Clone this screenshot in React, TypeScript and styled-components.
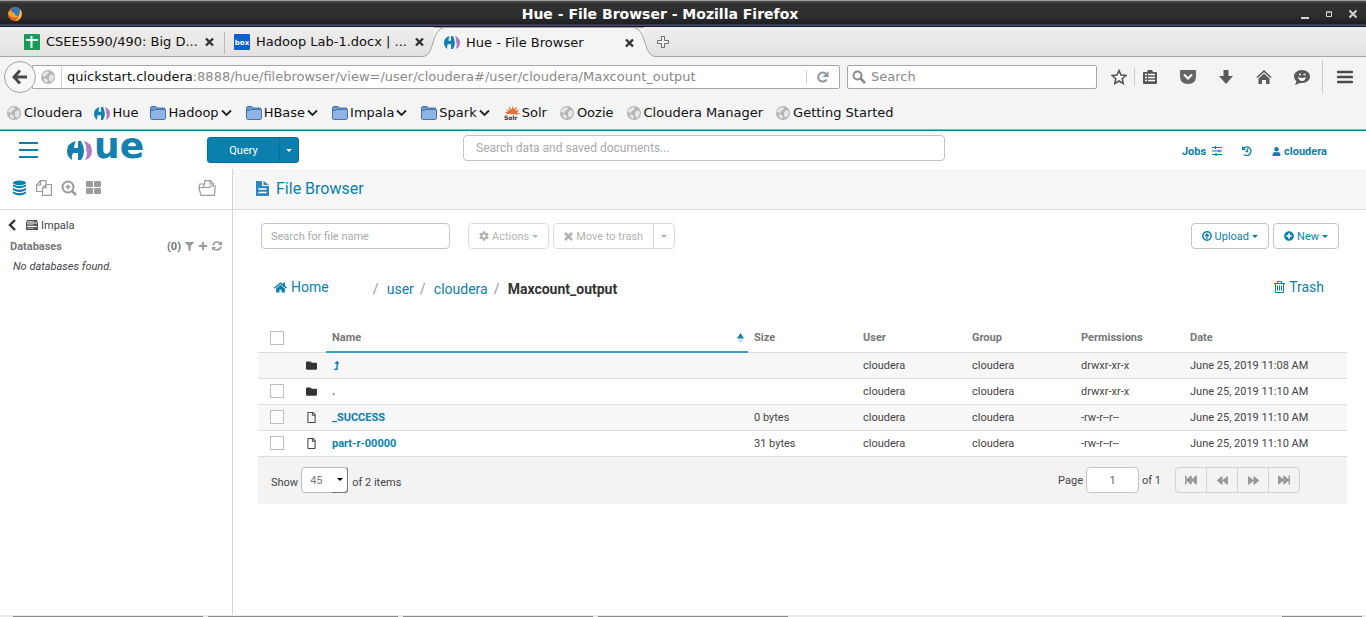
import React from 'react';
import styled, { createGlobalStyle, css } from 'styled-components';
import {
  FaCog, FaUser, FaFilter, FaPlus, FaFolder, FaRegFile, FaFastBackward,
  FaFastForward, FaBackward, FaForward, FaPlusCircle, FaLevelUpAlt, FaHome, FaChevronLeft,
} from 'react-icons/fa';

const BLUE = '#0b7fad';
const UI = '"DejaVu Sans", sans-serif';
const APP = 'Roboto, sans-serif';

const GlobalStyle = createGlobalStyle`
  *, *::before, *::after { box-sizing: border-box; }
  html, body { margin: 0; padding: 0; }
  body { background: #fff; font-family: ${APP}; font-size: 11px; color: #444; }
  button, input, select { font: inherit; margin: 0; }
  button { background: none; border: 0; padding: 0; color: inherit; cursor: pointer; }
  a { color: inherit; text-decoration: none; }
  svg { display: block; flex: none; }
`;

/* ---------- window and browser chrome ---------- */

const Page = styled.div`
  display: flex;
  flex-direction: column;
  min-height: 100vh;
`;

const TitleBar = styled.header`
  display: grid;
  grid-template-columns: 46px 1fr 92px;
  align-items: center;
  height: 27px;
  padding: 0 7px;
  border-top: 1px solid #9b9f9b;
  border-bottom: 1px solid #14181f;
  background: linear-gradient(#4b4d4b 0, #2f2f2f 3px, #2f2f2f 14px, #1d1f20 23px, #4a4c70 24px);
  color: #fff;
  font: bold 14px/20px ${UI};
  text-align: center;
`;

const WindowButtons = styled.div`
  display: flex;
  justify-content: flex-end;
  gap: 12px;
  color: #d6d6cf;
`;

const TabStrip = styled.nav`
  display: flex;
  height: 30px;
  padding-left: 14px;
  border-bottom: 1px solid #a5a5a3;
  background: linear-gradient(#efeeed, #e3e2e0);
  color: #111;
  font: 13px/28px ${UI};
`;

const Tab = styled.div<{ $active?: boolean; $divided?: boolean }>`
  position: relative;
  display: flex;
  align-items: center;
  gap: 6px;
  flex: 0 1 210px;
  min-width: 0;
  height: 29px;
  padding: 0 10px;
  ${p => p.$divided && css`
    &::after { content: ''; position: absolute; right: -1px; top: 5px; width: 1px; height: 22px; background: #b9b8b6; }
  `}
  ${p => p.$active && css`
    z-index: 1;
    height: 30px;
    border-top: 1px solid #a5a5a3;
    background: #f4f4f4;
  `}
`;

const TabLabel = styled.span`
  flex: 1;
  overflow: hidden;
  white-space: nowrap;
`;

const TabEdge = styled.svg<{ $side: 'left' | 'right' }>`
  position: absolute;
  z-index: -1;
  top: -1px;
  ${p => p.$side}: -16px;
`;

const NewTab = styled.button`
  padding-left: 12px;
`;

const NavBar = styled.div`
  display: flex;
  align-items: center;
  height: 40px;
  padding: 0 13px 0 4px;
  background: #f4f4f4;
  font: 13px/22px ${UI};
`;

const BackButton = styled.button`
  display: grid;
  place-items: center;
  z-index: 1;
  flex: none;
  width: 32px;
  height: 32px;
  margin-right: -4px;
  border: 1px solid #a3a3a3;
  border-radius: 50%;
  background: #f7f7f7;
`;

const AddressBar = styled.div`
  display: flex;
  align-items: center;
  flex: 1;
  min-width: 0;
  height: 24px;
  padding-left: 7px;
  border: 1px solid #a6a6a6;
  border-radius: 0 2px 2px 0;
  background: #fff;
  color: #8a8a8a;
`;

const Address = styled.div`
  flex: 1;
  margin-left: 5px;
  padding-left: 5px;
  border-left: 1px solid #d4d4d4;
  overflow: hidden;
  white-space: nowrap;
  b { font-weight: normal; color: #111; }
`;

const Reload = styled.button`
  padding: 0 9px;
  border-left: 1px solid #d4d4d4;
`;

const SearchBar = styled.label`
  display: flex;
  align-items: center;
  flex: 0 1 250px;
  gap: 5px;
  height: 24px;
  margin: 0 14px 0 7px;
  padding: 0 4px;
  border: 1px solid #a6a6a6;
  border-radius: 2px;
  background: #fff;
  input { flex: 1; min-width: 0; border: 0; padding: 0; outline: 0; background: none; }
  input::placeholder { color: #8a8a8a; opacity: 1; }
`;

const Tools = styled.div`
  display: flex;
  align-items: center;
  gap: 22px;
`;

const ToolPair = styled.div`
  display: flex;
  align-items: center;
  gap: 7px;
`;

const Divider = styled.span<{ $tall?: boolean }>`
  width: 1px;
  height: ${p => (p.$tall ? 34 : 18)}px;
  background: #cfcfcf;
`;

const MenuTool = styled.div`
  display: flex;
  align-items: center;
  gap: 14px;
  margin-left: -10px;
`;

const Bookmarks = styled.nav`
  display: flex;
  gap: 12px;
  height: 33px;
  padding-left: 6px;
  border-bottom: 1px solid #a9aaa8;
  background: #f4f4f4;
  color: #111;
  font: 13px/32px ${UI};
`;

const Bookmark = styled.a<{ $menu?: boolean }>`
  display: flex;
  align-items: center;
  gap: 2px;
  padding-right: ${p => (p.$menu ? 2 : 0)}px;
  white-space: nowrap;
`;

/* ---------- Hue header ---------- */

const HueBar = styled.header`
  display: flex;
  height: 39px;
  padding: 0 39px 0 19px;
  border-top: 1px solid #0f76a6;
  color: ${BLUE};
`;

const Brand = styled.div`
  display: flex;
  align-items: center;
  flex: 0 0 444px;
`;

const LogoLink = styled.a`
  display: flex;
  align-items: center;
  gap: 2px;
  width: 78px;
  margin: 0 62px 0 28px;
  color: #1380b0;
  font: bold 36px/38px ${UI};
  white-space: nowrap;
  span { display: block; padding-bottom: 8px; }
`;

const QueryGroup = styled.div`
  display: flex;
  height: 26px;
  border: 1px solid #096f98;
  border-radius: 3px;
  background: ${BLUE};
  color: #fff;
  button { display: grid; place-items: center; width: 71px; }
  button + button { width: 19px; border-left: 1px solid #096f98; }
`;

const TextBox = styled.input<{ $size?: number }>`
  height: 26px;
  min-width: 0;
  padding: 0 9px;
  border: 1px solid #c3c3c3;
  border-radius: 4px;
  background: #fff;
  color: #666;
  font-size: ${p => p.$size ?? 11}px;
  &::placeholder { color: #aaa; opacity: 1; }
`;

const GlobalSearch = styled(TextBox)`
  flex: 0 1 482px;
  margin-top: 4px;
  padding: 0 12px;
`;

const UserLinks = styled.nav`
  display: flex;
  align-items: center;
  gap: 20px;
  margin-left: auto;
  padding-top: 2px;
  font-weight: bold;
  a { display: flex; align-items: center; gap: 3px; }
  a:first-child { gap: 6px; }
`;

/* ---------- layout ---------- */

const Body = styled.div`
  display: flex;
  flex: 1;
`;

const Sidebar = styled.aside`
  flex: 0 0 233px;
  border-right: 1px solid #d3d3d3;
`;

const AssistTabs = styled.div`
  display: flex;
  align-items: center;
  gap: 9px;
  height: 41px;
  padding: 0 16px 2px 12px;
  border-bottom: 1px solid #d9d9d9;
  color: #9b9b9b;
  button:last-child { margin-left: auto; }
`;

const SourceLink = styled.a`
  display: flex;
  align-items: center;
  gap: 3px;
  height: 20px;
  margin-top: 5px;
  padding-left: 8px;
  svg + svg { margin-left: 6px; }
`;

const DatabaseHead = styled.div`
  display: flex;
  align-items: center;
  gap: 4px;
  height: 22px;
  padding: 0 10px;
  color: #777;
  font-weight: bold;
  h2 { flex: 1; margin: 0; font-size: 11px; }
  button { color: #999; }
`;

const Empty = styled.p`
  margin: 0;
  padding-left: 13px;
  line-height: 20px;
  font-style: italic;
`;

const Main = styled.main`
  flex: 1;
  min-width: 0;
`;

const PageHead = styled.div`
  display: flex;
  align-items: center;
  gap: 7px;
  height: 41px;
  padding: 0 23px 2px;
  border-bottom: 1px solid #dcdcdc;
  background: #f7f7f7;
  color: ${BLUE};
  h1 { margin: 0; font-size: 16px; font-weight: normal; }
`;

const Toolbar = styled.div`
  display: flex;
  gap: 4px;
  padding: 13px 27px 0 28px;
`;

const FileSearch = styled(TextBox)`
  flex: 0 1 189px;
  margin-right: 14px;
`;

const Btn = styled.button`
  display: flex;
  align-items: center;
  gap: 3px;
  height: 26px;
  padding: 0 10px;
  border: 1px solid #c3c3c3;
  border-radius: 4px;
  color: ${BLUE};
  white-space: nowrap;
  &:disabled { border-color: #dcdcdc; color: #b3b3b3; }
`;

const Joined = styled.div`
  display: flex;
  button:first-child { border-radius: 4px 0 0 4px; }
  button:last-child { margin-left: -1px; padding: 0 7px; border-radius: 0 4px 4px 0; }
`;

const Right = styled.div`
  display: flex;
  gap: 4px;
  margin-left: auto;
`;

const Crumbs = styled.nav`
  display: flex;
  align-items: center;
  padding: 26px 42px 0 41px;
  color: ${BLUE};
  font-size: 14px;
  line-height: 20px;
`;

const IconLink = styled.a`
  display: flex;
  align-items: center;
  gap: 4px;
  height: 20px;
`;

const Path = styled.ol`
  display: flex;
  flex: 1;
  margin: 4px 0 0 44px;
  padding: 0;
  list-style: none;
  li::before { content: '/'; display: inline-block; width: 14px; margin-left: 6px; color: #999; font-weight: normal; }
  li:first-child::before { margin-left: 0; }
  li:last-child { color: #333; font-weight: bold; }
`;

const Files = styled.section`
  padding: 25px 19px 0 25px;
`;

const Table = styled.table`
  width: 100%;
  border-collapse: collapse;
  table-layout: fixed;
  th, td { height: 26px; padding: 0 6px; border-bottom: 1px solid #dcdcdc; text-align: left; }
  td:first-child, th:first-child { padding-left: 12px; }
  th { height: 28px; color: #777; }
  tbody tr:nth-child(odd) { background: #f7f7f7; }
  td a { color: ${BLUE}; font-weight: bold; }
`;

const Col = styled.col<{ $w?: number }>`
  width: ${p => (p.$w ? `${p.$w}px` : 'auto')};
`;

const SortedTh = styled.th`
  && { border-bottom: 2px solid #3f9fc4; }
  div { display: flex; align-items: center; justify-content: space-between; margin-right: -2px; }
`;

const Check = styled.input`
  display: block;
  appearance: none;
  width: 14px;
  height: 14px;
  margin: 0;
  border: 1px solid #bdbdbd;
  background: #fff;
`;

const Footer = styled.div`
  display: flex;
  align-items: center;
  gap: 3px;
  height: 47px;
  padding: 0 15px 0 13px;
  background: #f3f3f3;
`;

const PageSize = styled.label`
  display: flex;
  align-items: center;
  gap: 4px;
  span { padding-top: 4px; }
  span:first-child { margin-right: -1px; }
`;

const SelectBox = styled.div`
  display: grid;
  grid-template-columns: 1fr 16px;
  width: 47px;
  height: 26px;
  select {
    grid-area: 1 / 1 / 2 / 3;
    appearance: none;
    padding: 0 8px;
    border: 1px solid #bcbcbc;
    border-radius: 4px;
    background: #fff;
    color: #777;
  }
`;

const SelectArrow = styled.i`
  display: grid;
  place-items: center;
  grid-area: 1 / 2;
  border-right: 1px solid #777;
  border-bottom: 1px solid #777;
  border-radius: 0 3px 3px 0;
  color: #000;
  pointer-events: none;
`;

const Paging = styled.div`
  display: flex;
  align-items: center;
  gap: 3px;
  margin-left: auto;
`;

const PageInput = styled(TextBox)`
  width: 53px;
  text-align: center;
`;

const Pager = styled.div`
  display: flex;
  height: 26px;
  margin-left: 11px;
  padding-right: 32px;
  border: 1px solid #f0f0f0;
  border-radius: 4px;
  button {
    display: grid;
    place-items: center;
    width: 32px;
    margin: -1px -1px -1px 0;
    border: 1px solid #d3d3d3;
    color: #999;
  }
  button:first-child { margin-left: -1px; border-radius: 4px 0 0 4px; }
  button:last-child { border-radius: 0 4px 4px 0; }
`;

const TaskBar = styled.footer`
  display: flex;
  gap: 5px;
  height: 2px;
  padding: 1px 4px 0 13px;
  background: #ecebe9;
`;

const Task = styled.span<{ $w: number; $last?: boolean }>`
  flex: 0 1 ${p => p.$w}px;
  height: 1px;
  background: #8d8b89;
  margin-left: ${p => (p.$last ? 'auto' : '0')};
`;

/* ---------- drawings ---------- */

const Caret = ({ w = 6 }: { w?: number }) => (
  <svg width={w} height={3} viewBox="0 0 6 3"><path d="M0 0h6L3 3z" fill="currentColor" /></svg>
);

const HueMark = ({ w = 16, h = 13 }: { w?: number; h?: number }) => (
  <svg width={w} height={h} viewBox="0 0 25 19" preserveAspectRatio="none">
    <path d="M9 0Q0 2 0 10q0 6 5 9-1-4 1-7h5v7h3q3-4 3-9T14 0h-3v7H7Q7 3 9 0z" fill="#1380b0" />
    <path d="M17 0q3 5 2 9l1 2q0 5-2 8 7-2 7-9 0-8-8-10z" fill="#b07cc6" />
  </svg>
);

const Globe = () => (
  <svg width="16" height="16" viewBox="0 0 16 16">
    <circle cx="8" cy="8" r="7" fill="#b5b5b5" />
    <path d="M3 4l4-2 2 1-1 2-2 1-1 2-3-1zM9 7l3-2 2 2-1 4-2 2-2-2zM4 9l3 1 1 2-1 2-3-2z" fill="#e6e6e6" />
  </svg>
);

const Folder = () => (
  <svg width="16" height="16" viewBox="0 0 16 16">
    <path d="M.5 14V2.500l1-1h4.500l1.500 1.500h7v3" fill="#6f96c8" stroke="#4672ab" />
    <path d="M.5 5.500h3l1-1h11v9l-1 1h-13l-1-1z" fill="#8db4e2" stroke="#4672ab" />
  </svg>
);

const SolrMark = () => (
  <svg width="16" height="16" viewBox="0 0 16 16">
    <path d="M3 9L1 7l3 0-2-3 3.500 2L5 1l2.500 4L9 .5l.8 4L13 1.500 11.500 6 15 4.500 13 8l3 0-2 1.500z" fill="#e2703a" />
    <text x="0" y="15" fontFamily="DejaVu Sans" fontWeight="bold" fontSize="6" fill="#333">Solr</text>
  </svg>
);

const Chevron = () => (
  <svg width="11" height="8" viewBox="0 0 11 8"><path d="M1 1.500L5.500 6 10 1.500" fill="none" stroke="#222" strokeWidth="1.800" /></svg>
);

const Close = () => (
  <svg width="9" height="10" viewBox="0 0 9 10"><path d="M1 1.500l7 7M8 1.500l-7 7" stroke="#333" strokeWidth="2.400" /></svg>
);

const Firefox = () => (
  <svg width="16" height="16" viewBox="0 0 16 16">
    <circle cx="8" cy="8" r="7" fill="#e0601c" />
    <circle cx="8.500" cy="6" r="4.800" fill="#2f78c0" />
    <path d="M1 6q2 0 3-2 1 3 4 3-1 3 4 3-2 3-7 1-4-1-4-5z" fill="#f0a030" />
    <path d="M13 3q3 4 1 8-2 4-6 4 5-3 5-12z" fill="#f6c24a" />
  </svg>
);

const Sheets = () => (
  <svg width="16" height="16" viewBox="0 0 16 16">
    <rect width="16" height="16" rx="1" fill="#149c58" />
    <path d="M2 6h12M7.500 2v12" stroke="#fff" strokeWidth="2" />
  </svg>
);

const Box = () => (
  <svg width="16" height="16" viewBox="0 0 16 16">
    <rect width="16" height="16" rx="1" fill="#0b5fd0" />
    <text x="8" y="11" textAnchor="middle" fontFamily="DejaVu Sans" fontWeight="bold" fontSize="7" fill="#fff">box</text>
  </svg>
);

const bookmarks: { label: string; icon: React.ReactNode; menu?: boolean }[] = [
  { label: 'Cloudera', icon: <Globe /> },
  { label: 'Hue', icon: <HueMark /> },
  { label: 'Hadoop', icon: <Folder />, menu: true },
  { label: 'HBase', icon: <Folder />, menu: true },
  { label: 'Impala', icon: <Folder />, menu: true },
  { label: 'Spark', icon: <Folder />, menu: true },
  { label: 'Solr', icon: <SolrMark /> },
  { label: 'Oozie', icon: <Globe /> },
  { label: 'Cloudera Manager', icon: <Globe /> },
  { label: 'Getting Started', icon: <Globe /> },
];

const files = [
  { name: '..', dir: true, size: '', perms: 'drwxr-xr-x', date: 'June 25, 2019 11:08 AM' },
  { name: '.', dir: true, size: '', perms: 'drwxr-xr-x', date: 'June 25, 2019 11:10 AM' },
  { name: '_SUCCESS', dir: false, size: '0 bytes', perms: '-rw-r--r--', date: 'June 25, 2019 11:10 AM' },
  { name: 'part-r-00000', dir: false, size: '31 bytes', perms: '-rw-r--r--', date: 'June 25, 2019 11:10 AM' },
];

const Chrome = () => (
  <>
    <TitleBar>
      <Firefox />
      <span>Hue - File Browser - Mozilla Firefox</span>
      <WindowButtons>
        <button aria-label="Minimize"><svg width="12" height="12"><path d="M2 10h8" stroke="currentColor" strokeWidth="2" /></svg></button>
        <button aria-label="Maximize"><svg width="12" height="12"><path d="M3.500 4h5v4.500h-5zM3 4h6" fill="none" stroke="currentColor" /></svg></button>
        <button aria-label="Close"><svg width="12" height="12"><path d="M2.500 2.500l7 7M9.500 2.500l-7 7" stroke="currentColor" strokeWidth="2" /></svg></button>
      </WindowButtons>
    </TitleBar>
    <TabStrip>
      <Tab $divided><Sheets /><TabLabel>CSEE5590/490: Big D...</TabLabel><button aria-label="Close tab"><Close /></button></Tab>
      <Tab><Box /><TabLabel>Hadoop Lab-1.docx | ...</TabLabel><button aria-label="Close tab"><Close /></button></Tab>
      <Tab $active>
        <TabEdge $side="left" width="28" height="30" viewBox="0 0 28 30">
          <path d="M4 29.500C18 29.500 12 .5 28 .5V30H4z" fill="#f4f4f4" />
          <path d="M0 29.500H4C18 29.500 12 .5 28 .5" fill="none" stroke="#a5a5a3" />
        </TabEdge>
        <TabEdge $side="right" width="28" height="30" viewBox="0 0 28 30">
          <path d="M24 29.500C10 29.500 16 .5 0 .5V30h24z" fill="#f4f4f4" />
          <path d="M28 29.500H24C10 29.500 16 .5 0 .5" fill="none" stroke="#a5a5a3" />
        </TabEdge>
        <HueMark /><TabLabel>Hue - File Browser</TabLabel><button aria-label="Close tab"><Close /></button>
      </Tab>
      <NewTab aria-label="New tab">
        <svg width="14" height="14" viewBox="0 0 14 14"><path d="M5.500 1.500h3v4h4v3h-4v4h-3v-4h-4v-3h4z" fill="#f4f4f4" stroke="#6b6b6b" /></svg>
      </NewTab>
    </TabStrip>
    <NavBar>
      <BackButton aria-label="Back">
        <svg width="16" height="16" viewBox="0 0 16 16"><path d="M8 1.500L2 8l6 6.500M2.500 8H15" fill="none" stroke="#4a4a4a" strokeWidth="3" /></svg>
      </BackButton>
      <AddressBar>
        <Globe />
        <Address><b>quickstart.cloudera</b>:8888/hue/filebrowser/view=/user/cloudera#/user/cloudera/Maxcount_output</Address>
        <Reload aria-label="Reload">
          <svg width="14" height="14" viewBox="0 0 14 14"><path d="M10.500 9.500A4.500 4.500 0 1 1 10 4" fill="none" stroke="#8b96a5" strokeWidth="2" /><path d="M12.500 1v6h-6z" fill="#8b96a5" /></svg>
        </Reload>
      </AddressBar>
      <SearchBar>
        <svg width="14" height="14" viewBox="0 0 14 14"><circle cx="5.500" cy="5.500" r="4" fill="none" stroke="#8a8a8a" strokeWidth="2" /><path d="M8.500 8.500L13 13" stroke="#8a8a8a" strokeWidth="2.500" /></svg>
        <input placeholder="Search" aria-label="Search the web" />
      </SearchBar>
      <Tools>
        <ToolPair>
          <button aria-label="Bookmark this page"><svg width="16" height="16" viewBox="0 0 16 16"><path d="M8 1.500l2 4.500 4.800.5-3.600 3.200 1 4.800L8 12l-4.200 2.500 1-4.800L1.200 6.500 6 6z" fill="#fff" stroke="#555" strokeWidth="1.600" /></svg></button>
          <Divider />
          <button aria-label="Bookmarks"><svg width="16" height="16" viewBox="0 0 16 16"><path d="M1 4q0-1 1-1h3l1-2h4l1 2h3q1 0 1 1v10q0 1-1 1H2q-1 0-1-1z" fill="#555" /><path d="M3 5.500h2M6 5.500h7M3 8.500h2M6 8.500h7M3 11.500h2M6 11.500h7" stroke="#fff" strokeWidth="1.600" /></svg></button>
        </ToolPair>
        <button aria-label="Pocket"><svg width="16" height="16" viewBox="0 0 16 16"><path d="M1 1h14q1 0 1 1v5q0 8-8 8T0 7V2q0-1 1-1z" fill="#666" /><path d="M4 5.500l4 4 4-4" fill="none" stroke="#fff" strokeWidth="2" /></svg></button>
        <button aria-label="Downloads"><svg width="16" height="16" viewBox="0 0 16 16"><path d="M5.500 1h5v6H15l-7 8-7-8h4.500z" fill="#5a5a5a" /></svg></button>
        <button aria-label="Home page"><svg width="16" height="16" viewBox="0 0 16 16"><path d="M1 8.500L8 2l7 6.500" fill="none" stroke="#555" strokeWidth="1.600" /><path d="M8 4.500l5.500 5V15H10v-4H6v4H2.500V9.500z" fill="#5a5a5a" /></svg></button>
        <button aria-label="Hello"><svg width="16" height="16" viewBox="0 0 16 16"><path d="M8 1c5 0 8 3 8 6.500S13 14 8 14q-1 0-2 0l-5 2 1.500-3.500Q0 10.500 0 7.500C0 4 3 1 8 1z" fill="#5a5a5a" /><path d="M4 8q4 2 8 0-1 4-4 4T4 8z" fill="#fff" /><path d="M5 5.500h2M9.500 5.500h2" stroke="#fff" strokeWidth="1.500" /></svg></button>
        <MenuTool>
          <Divider $tall />
          <button aria-label="Menu"><svg width="16" height="16" viewBox="0 0 16 16"><path d="M1 3h14M1 8h14M1 13h14" stroke="#4a4a4a" strokeWidth="2.500" strokeLinecap="round" /></svg></button>
        </MenuTool>
      </Tools>
    </NavBar>
    <Bookmarks>
      {bookmarks.map(b => (
        <Bookmark href="#" key={b.label} $menu={b.menu}>{b.icon}{b.label}{b.menu && <Chevron />}</Bookmark>
      ))}
    </Bookmarks>
  </>
);

const Header = () => (
  <HueBar>
    <Brand>
      <button aria-label="Menu"><svg width="20" height="16" viewBox="0 0 20 16"><path d="M0 1h19M0 8h19M0 15h19" stroke={BLUE} strokeWidth="2" /></svg></button>
      <LogoLink href="#" aria-label="Hue"><HueMark w={25} h={19} /><span>ue</span></LogoLink>
      <QueryGroup>
        <button>Query</button>
        <button aria-label="Query types"><Caret /></button>
      </QueryGroup>
    </Brand>
    <GlobalSearch $size={12} placeholder="Search data and saved documents..." aria-label="Search data and saved documents" />
    <UserLinks>
      <a href="#">Jobs
        <svg width="10" height="10" viewBox="0 0 10 10"><path d="M0 1.500h10M0 5h10M0 8.500h10M3.500 0v3M7 3.500v3M4 7v3" stroke="currentColor" strokeWidth="1.200" /></svg>
      </a>
      <a href="#" aria-label="History">
        <svg width="10" height="10" viewBox="0 0 10 10"><path d="M1.500 2.500A4.200 4.200 0 1 1 2 8.500M5.500 2.500v3h-2" fill="none" stroke="currentColor" strokeWidth="1.400" /><path d="M0 0v4h4z" fill="currentColor" /></svg>
      </a>
      <a href="#"><FaUser size={9} />cloudera</a>
    </UserLinks>
  </HueBar>
);

const Assist = () => (
  <Sidebar>
    <AssistTabs>
      <button aria-label="Databases">
        <svg width="15" height="16" viewBox="0 0 16 16" fill={BLUE}><ellipse cx="8" cy="2.500" rx="7" ry="2.500" /><path d="M1 4.200q7 3.300 14 0v2q-7 4.300-14 0zM1 8q7 3.500 14 0v2q-7 4.300-14 0zM1 11.800q7 3.500 14 0v1.700q-7 5-14 0z" /></svg>
      </button>
      <button aria-label="Documents">
        <svg width="16" height="16" viewBox="0 0 16 16" fill="none" stroke="currentColor" strokeWidth="1.200"><path d="M6 11.500H.6V5L4.500.6H10V4M4.500.6V5H.6M6.500 15.400V8l3.500-3.500h5.400v10.900zM10 4.500V8H6.500" /></svg>
      </button>
      <button aria-label="Search">
        <svg width="16" height="16" viewBox="0 0 16 16" fill="none" stroke="currentColor"><circle cx="7" cy="7" r="5.500" strokeWidth="2" /><path d="M4.500 7h5M7 4.500v5" strokeWidth="1.500" /><path d="M11 11l4 4" strokeWidth="2.500" /></svg>
      </button>
      <button aria-label="Dashboards">
        <svg width="16" height="14" viewBox="0 0 16 14" fill="currentColor"><rect width="7" height="6" rx="1" /><rect x="8" width="7" height="6" rx="1" /><rect y="7" width="7" height="6" rx="1" /><rect x="8" y="7" width="7" height="6" rx="1" /></svg>
      </button>
      <button aria-label="Open document">
        <svg width="18" height="16" viewBox="0 0 18 16" fill="none" stroke="currentColor" strokeWidth="1.200"><path d="M5.500 7L7 .6h5.500L15.500 4v2M12 .6V4h3.500M5.500 4H2L.8 7.500 3 15.400h13.500l.7-9.400H13l-2 1.500H.8" /></svg>
      </button>
    </AssistTabs>
    <SourceLink href="#">
      <svg width="9" height="12" viewBox="0 0 9 12"><path d="M7 1L2 6l5 5" fill="none" stroke="#333" strokeWidth="2.400" /></svg>
      <svg width="12" height="10" viewBox="0 0 12 10"><path d="M1 0h10l1 3v7H0V3z" fill="#555" /><path d="M1 3h10M1 6.500h10" stroke="#fff" /><path d="M1.500 1.500h6M1.500 4.800h6M1.500 8.300h6" stroke="#bbb" /></svg>
      Impala
    </SourceLink>
    <DatabaseHead>
      <h2>Databases</h2>
      (0)
      <button aria-label="Filter"><FaFilter size={9} /></button>
      <button aria-label="Create database"><FaPlus size={10} /></button>
      <button aria-label="Refresh">
        <svg width="10" height="10" viewBox="0 0 10 10"><path d="M1 4.500Q2 1 5 1q2 0 3.500 1.800M9 5.500Q8 9 5 9 3 9 1.500 7.200" fill="none" stroke="currentColor" strokeWidth="1.500" /><path d="M10 0v4H6zM0 10V6h4z" fill="currentColor" /></svg>
      </button>
    </DatabaseHead>
    <Empty>No databases found.</Empty>
  </Sidebar>
);

const FileTable = () => (
  <Table>
    <colgroup>
      <Col $w={42} /><Col $w={26} /><Col /><Col $w={109} /><Col $w={109} /><Col $w={109} /><Col $w={109} /><Col $w={163} />
    </colgroup>
    <thead>
      <tr>
        <th><Check type="checkbox" aria-label="Select all" /></th>
        <th />
        <SortedTh>
          <div>Name<svg width="7" height="10" viewBox="0 0 7 10"><path d="M3.500 0L7 5.500H0z" fill="#1380b0" /><path d="M.5 6.500h6L3.500 10z" fill="#c9d7ea" /></svg></div>
        </SortedTh>
        <th>Size</th><th>User</th><th>Group</th><th>Permissions</th><th>Date</th>
      </tr>
    </thead>
    <tbody>
      {files.map(f => (
        <tr key={f.name}>
          <td>{f.name !== '..' && <Check type="checkbox" aria-label={`Select ${f.name}`} />}</td>
          <td>{f.dir ? <FaFolder size={11} color="#333" /> : <FaRegFile size={11} color="#444" />}</td>
          <td><a href="#">{f.name === '..' ? <FaLevelUpAlt size={9} aria-label="Parent folder" /> : f.name}</a></td>
          <td>{f.size}</td>
          <td>cloudera</td>
          <td>cloudera</td>
          <td>{f.perms}</td>
          <td>{f.date}</td>
        </tr>
      ))}
    </tbody>
  </Table>
);

export default function App() {
  return (
    <Page>
      <GlobalStyle />
      <Chrome />
      <Header />
      <Body>
        <Assist />
        <Main>
          <PageHead>
            <svg width="13" height="15" viewBox="0 0 13 15"><path d="M0 0h6v5h7v10H0zM7.500 0L13 4H7.500z" fill="#2f86c0" /><path d="M2.500 8h8M2.500 11.500h8" stroke="#fff" strokeWidth="1.300" /></svg>
            <h1>File Browser</h1>
          </PageHead>
          <Toolbar>
            <FileSearch placeholder="Search for file name" aria-label="Search for file name" />
            <Btn disabled><FaCog size={10} />Actions<Caret /></Btn>
            <Joined>
              <Btn disabled>
                <svg width="9" height="9" viewBox="0 0 9 9"><path d="M1 1l7 7M8 1L1 8" stroke="currentColor" strokeWidth="2.800" /></svg>
                Move to trash
              </Btn>
              <Btn disabled aria-label="More delete options"><Caret /></Btn>
            </Joined>
            <Right>
              <Btn>
                <svg width="10" height="10" viewBox="0 0 10 10" fill="none" stroke="currentColor"><circle cx="5" cy="5" r="4.200" strokeWidth="1.500" /><path d="M5 8V3.500M3 5l2-2 2 2" strokeWidth="1.200" /></svg>
                Upload<Caret />
              </Btn>
              <Btn><FaPlusCircle size={10} />New<Caret /></Btn>
            </Right>
          </Toolbar>
          <Crumbs>
            <IconLink href="#"><FaHome size={13} />Home</IconLink>
            <Path>
              <li><a href="#">user</a></li>
              <li><a href="#">cloudera</a></li>
              <li>Maxcount_output</li>
            </Path>
            <IconLink href="#">
              <svg width="11" height="12" viewBox="0 0 11 12" fill="none" stroke="currentColor"><path d="M0 2.500h11M3.500 2V.5h4V2M1.500 3v8.500h8V3M3.500 4.500v5M5.500 4.500v5M7.500 4.500v5" /></svg>
              Trash
            </IconLink>
          </Crumbs>
          <Files>
            <FileTable />
            <Footer>
              <PageSize>
                <span>Show</span>
                <SelectBox>
                  <select aria-label="Items per page" defaultValue="45"><option>45</option></select>
                  <SelectArrow><Caret /></SelectArrow>
                </SelectBox>
                <span>of 2 items</span>
              </PageSize>
              <Paging>
                <label htmlFor="page">Page</label>
                <PageInput id="page" defaultValue="1" />
                of 1
                <Pager>
                  <button aria-label="First page"><FaFastBackward size={12} /></button>
                  <button aria-label="Previous page"><FaBackward size={11} /></button>
                  <button aria-label="Next page"><FaForward size={11} /></button>
                  <button aria-label="Last page"><FaFastForward size={12} /></button>
                </Pager>
              </Paging>
            </Footer>
          </Files>
        </Main>
      </Body>
      <TaskBar>
        <Task $w={190} /><Task $w={190} /><Task $w={190} /><Task $w={190} /><Task $w={80} $last />
      </TaskBar>
    </Page>
  );
}
